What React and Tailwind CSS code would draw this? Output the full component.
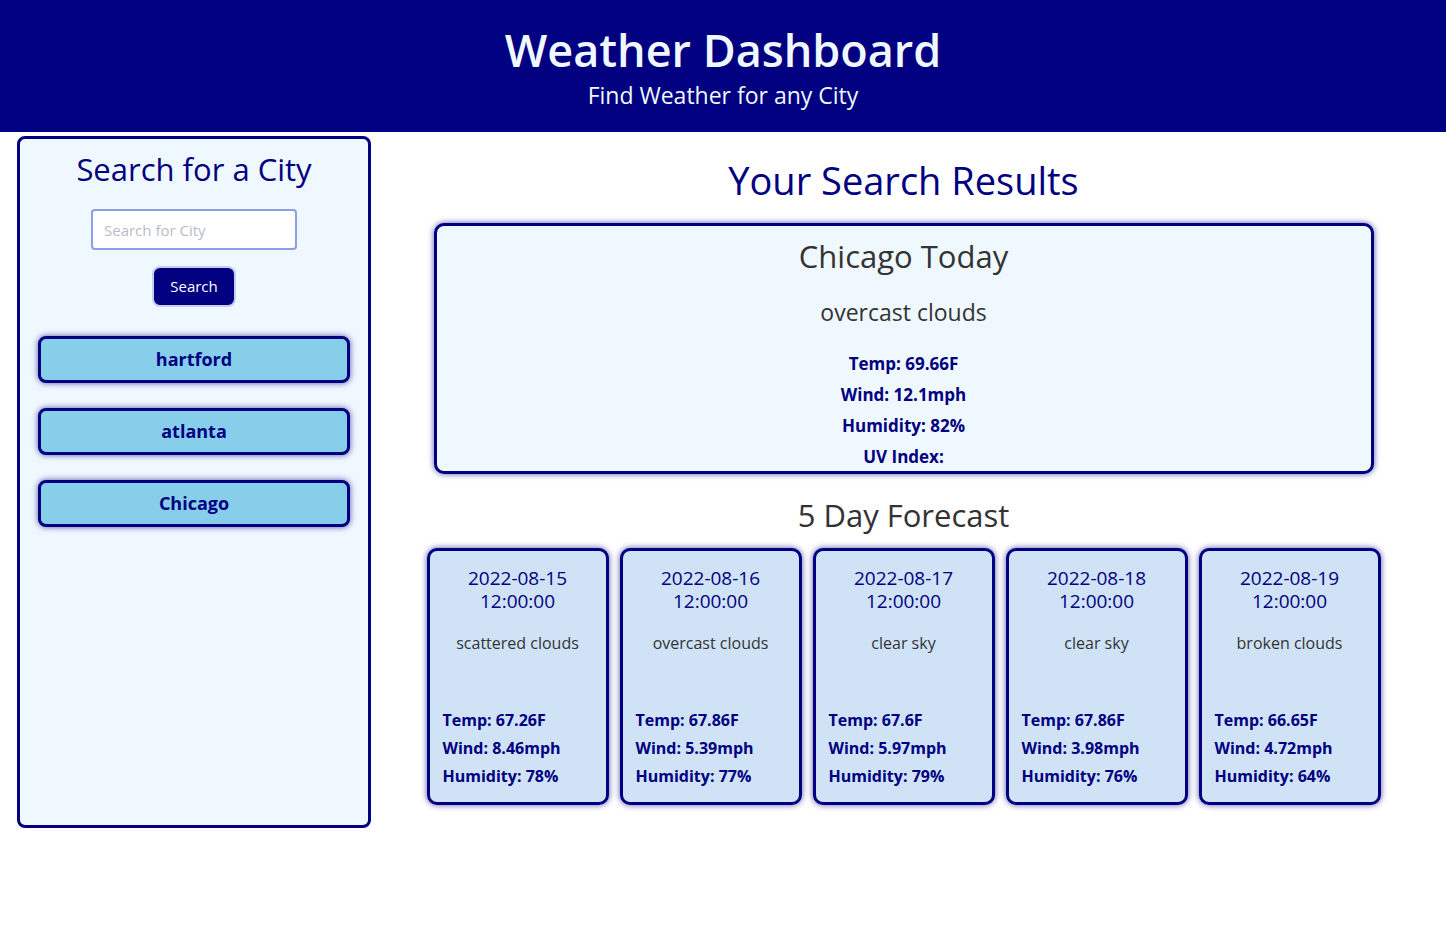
const today = {
  city: 'Chicago',
  desc: 'overcast clouds',
  temp: '69.66F',
  wind: '12.1mph',
  humidity: '82%',
};

const forecast = [
  { date: '2022-08-15', desc: 'scattered clouds', temp: '67.26F', wind: '8.46mph', humidity: '78%' },
  { date: '2022-08-16', desc: 'overcast clouds', temp: '67.86F', wind: '5.39mph', humidity: '77%' },
  { date: '2022-08-17', desc: 'clear sky', temp: '67.6F', wind: '5.97mph', humidity: '79%' },
  { date: '2022-08-18', desc: 'clear sky', temp: '67.86F', wind: '3.98mph', humidity: '76%' },
  { date: '2022-08-19', desc: 'broken clouds', temp: '66.65F', wind: '4.72mph', humidity: '64%' },
];

const history = ['hartford', 'atlanta', 'Chicago'];

const ForecastCard = ({ day }) => (
  <div className="flex h-[257px] w-[182px] flex-col rounded-[10px] border-[3px] border-[#000080] bg-[#cfe2f6] px-[13px] pt-[16px] shadow-[0_0_6px_#000080aa]">
    <div className="text-center text-[19px] leading-[23px] text-[#000080]">
      <p>{day.date}</p>
      <p>12:00:00</p>
    </div>
    <p className="mt-[18px] text-center text-[16px] text-[#333]">{day.desc}</p>
    <div className="mt-[54px] space-y-[6px] text-[16px] font-bold leading-[22px] text-[#000080]">
      <p>Temp: {day.temp}</p>
      <p>Wind: {day.wind}</p>
      <p>Humidity: {day.humidity}</p>
    </div>
  </div>
);

export default function App() {
  return (
    <div className="min-h-[942px] bg-white font-['Open_Sans',sans-serif]">
      <header className="flex h-[132px] flex-col items-center bg-[#000080] pt-[23px] text-[#f0f8ff]">
        <h1 className="text-[45px] font-semibold leading-[54px]">Weather Dashboard</h1>
        <p className="mt-[2px] text-[23px] leading-[32px]">Find Weather for any City</p>
      </header>

      <div className="flex">
        <aside className="ml-[17px] mt-[4px] h-[692px] w-[354px] rounded-[8px] border-[3px] border-[#000080] bg-[#f0f8ff] px-[18px]">
          <h2 className="mt-[10px] text-center text-[31px] font-medium leading-[40px] text-[#000080]">Search for a City</h2>
          <div className="mt-[20px] flex flex-col items-center">
            <input
              placeholder="Search for City"
              className="h-[41px] w-[206px] rounded-[4px] border-2 border-[#8a9fe8] bg-white px-[11px] text-[15px] text-[#333] placeholder:text-[#b8bcc8] outline-none"
            />
            <button className="mt-[16px] h-[41px] w-[84px] rounded-[8px] border-2 border-[#c5cdf2] bg-[#000080] text-[15px] text-white">
              Search
            </button>
          </div>
          <div className="mt-[29px] flex flex-col gap-[25px]">
            {history.map((city) => (
              <button
                key={city}
                className="h-[47px] w-full rounded-[8px] border-[3px] border-[#000080] bg-[#87ceeb] text-[18px] font-bold text-[#000080] shadow-[0_0_6px_#000080aa]"
              >
                {city}
              </button>
            ))}
          </div>
        </aside>

        <main className="ml-[56px] flex w-[953px] flex-col items-center">
          <h2 className="mt-[23px] text-[38px] font-medium leading-[50px] text-[#000080]">Your Search Results</h2>
          <section className="mt-[18px] flex h-[251px] w-[940px] flex-col items-center rounded-[10px] border-[3px] border-[#000080] bg-[#f0f8ff] pt-[10px] shadow-[0_0_6px_#000080aa]">
            <h3 className="text-[31px] leading-[40px] text-[#333]">{today.city} Today</h3>
            <p className="mt-[21px] text-[23px] leading-[30px] text-[#333]">{today.desc}</p>
            <div className="mt-[25px] flex flex-col items-center gap-[7px] text-[17px] font-bold leading-[24px] text-[#000080]">
              <p>Temp: {today.temp}</p>
              <p>Wind: {today.wind}</p>
              <p>Humidity: {today.humidity}</p>
              <p>UV Index:</p>
            </div>
          </section>
          <h3 className="mt-[21px] text-[31px] leading-[40px] text-[#333]">5 Day Forecast</h3>
          <div className="mt-[13px] flex gap-[11px]">
            {forecast.map((day) => (
              <ForecastCard key={day.date} day={day} />
            ))}
          </div>
        </main>
      </div>
    </div>
  );
}
